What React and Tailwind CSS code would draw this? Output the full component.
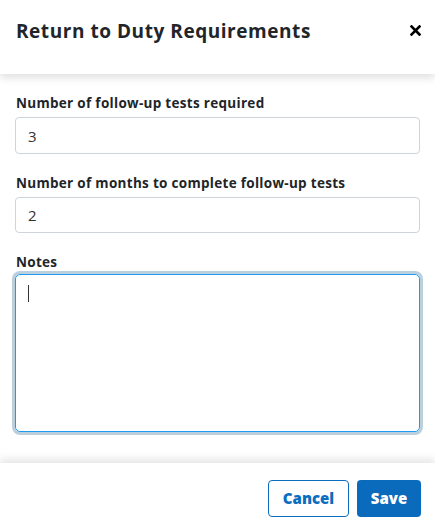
export default function App() {
  return (
    <div
      className="flex h-[531px] w-[435px] flex-col bg-white text-[#212529]"
      style={{ fontFamily: '"Open Sans", "Liberation Sans", sans-serif' }}
    >
      <header className="relative z-10 flex h-[74px] shrink-0 items-start justify-between bg-white pl-4 pr-[14px] pt-[19px] shadow-[0_4px_8px_rgba(0,0,0,0.12)]">
        <h1 className="text-[19px] font-bold leading-6 tracking-[0.55px]">
          Return to Duty Requirements
        </h1>
        <button className="mt-[6px] text-black">
          <svg width="11" height="11" viewBox="0 0 11 11">
            <path d="M1.5 1.5L9.5 9.5M9.5 1.5L1.5 9.5" stroke="currentColor" strokeWidth="2.6" strokeLinecap="square" />
          </svg>
        </button>
      </header>

      <main className="flex-1 px-[15px] pt-[21px]">
        <label className="block pl-[1px] text-[13.5px] font-bold leading-4 tracking-[0.3px]">
          Number of follow-up tests required
        </label>
        <input
          readOnly
          value="3"
          className="mt-[6px] block h-[37px] w-full rounded-[4px] border border-[#ced4da] px-3 text-[15px] text-[#333]"
        />

        <label className="mt-[21px] block pl-[1px] text-[13.5px] font-bold leading-4 tracking-[0.3px]">
          Number of months to complete follow-up tests
        </label>
        <input
          readOnly
          value="2"
          className="mt-[6px] block h-[36px] w-full rounded-[4px] border border-[#ced4da] px-3 text-[15px] text-[#333]"
        />

        <label className="mt-[21px] block pl-[1px] text-[13.5px] font-bold leading-4 tracking-[0.3px]">
          Notes
        </label>
        <div className="mt-[4px] h-[158px] w-full rounded-[5px] border border-[#1e9bf0] px-3 py-2 ring-[3px] ring-[#bccfdd]">
          <div className="mt-[2px] h-[17px] w-px bg-[#333]" />
        </div>
      </main>

      <footer className="relative z-10 flex h-[68px] shrink-0 items-start justify-end gap-2 bg-white px-[14px] pt-[17px] shadow-[0_-4px_8px_rgba(0,0,0,0.1)]">
        <button className="h-[37px] w-[81px] rounded-[4px] border border-[#0a6dbf] bg-white text-[15px] font-extrabold text-[#0a6dbf]">
          Cancel
        </button>
        <button className="h-[37px] w-[64px] rounded-[4px] bg-[#0a6bbd] text-[15px] font-extrabold text-white">
          Save
        </button>
      </footer>
    </div>
  );
}
